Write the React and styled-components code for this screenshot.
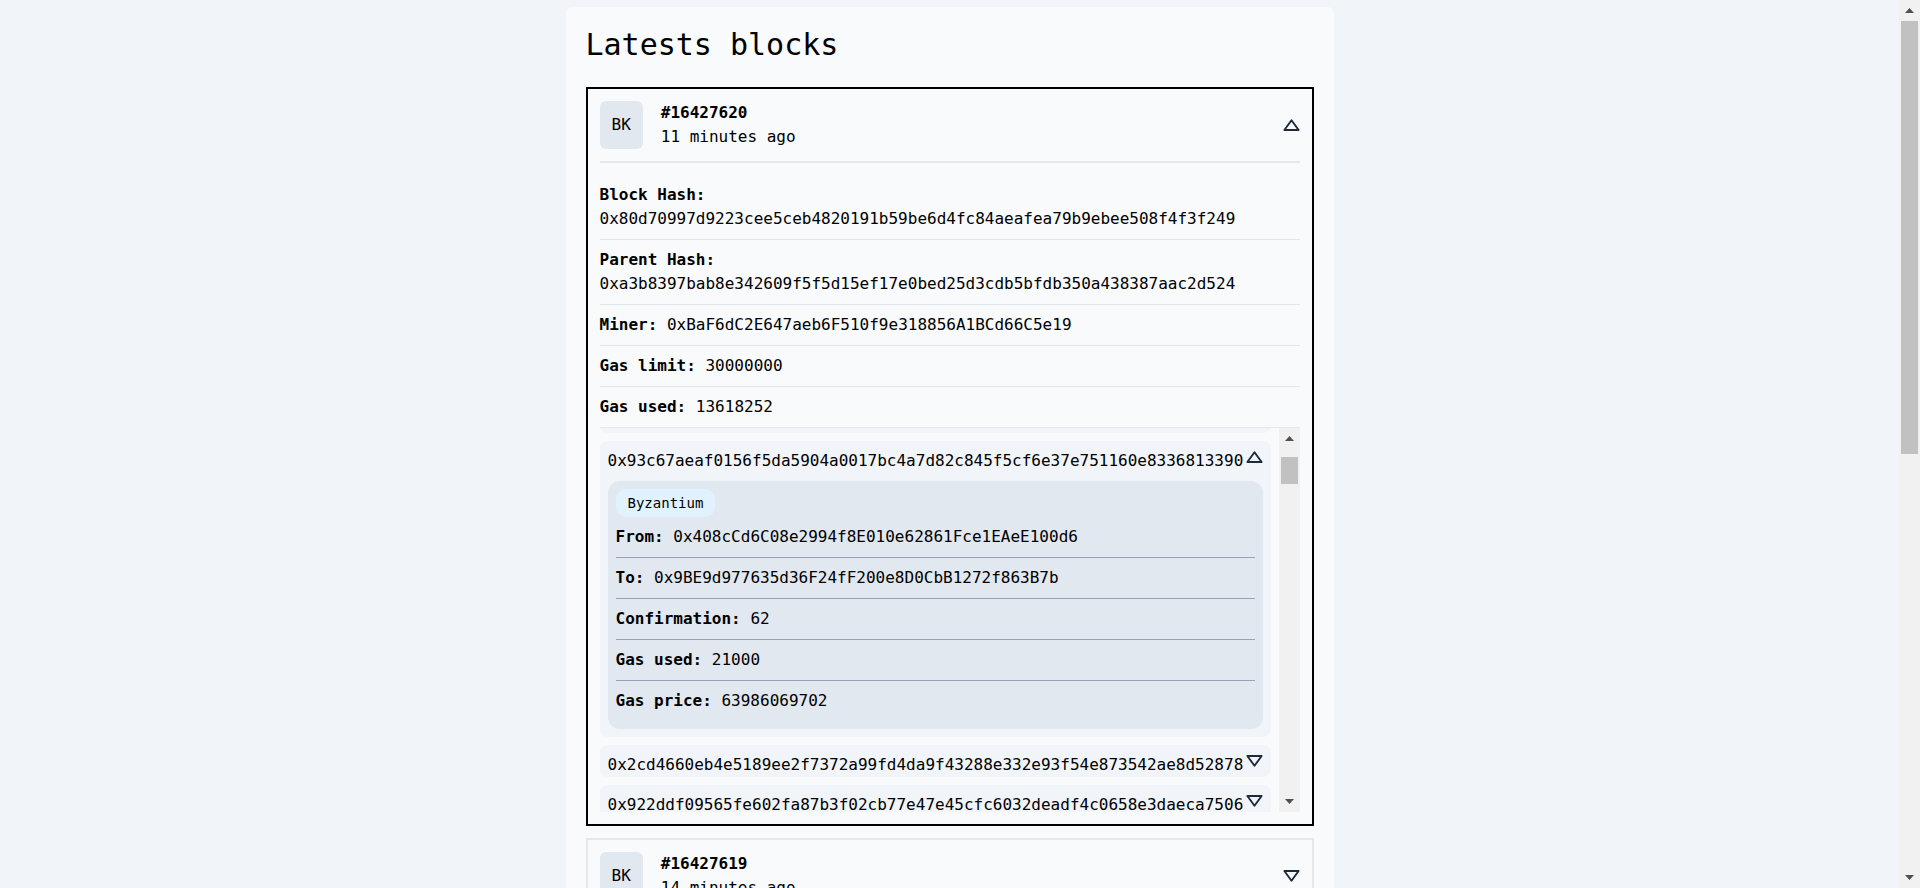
import React, { useCallback, useEffect, useLayoutEffect, useRef, useState } from 'react';
import styled, { createGlobalStyle } from 'styled-components';

const GlobalStyle = createGlobalStyle`
  html, body { margin: 0; padding: 0; background: #f1f5f9; }
  html { scrollbar-width: none; }
  body {
    font-family: "DejaVu Sans Mono", "Liberation Mono", monospace;
    color: #000;
    font-size: 16px;
    line-height: 24px;
  }
  *, *::before, *::after { box-sizing: border-box; }
`;

/* ---------- scrollbar look-alike ---------- */

const Rail = styled.div`
  width: 21px;
  flex-shrink: 0;
  background: #f1f1f1;
  display: flex;
  flex-direction: column;
  ${(p) => p.$window && 'position: fixed; top: 0; right: 0; height: 100vh;'}
`;

const RailButton = styled.div`
  height: 21px;
  flex-shrink: 0;
  display: flex;
  align-items: center;
  justify-content: center;
`;

const RailTrack = styled.div`
  flex: 1;
  position: relative;
`;

const RailThumb = styled.div`
  position: absolute;
  left: 2px;
  right: 2px;
  background: #c1c1c1;
`;

function Arrow({ up }) {
  return (
    <svg width="9" height="5" viewBox="0 0 9 5" aria-hidden="true">
      <polygon points={up ? '4.5,0 9,5 0,5' : '0,0 9,0 4.5,5'} fill="#505050" />
    </svg>
  );
}

function ScrollRail({ thumb, window: isWindow }) {
  return (
    <Rail $window={isWindow}>
      <RailButton><Arrow up /></RailButton>
      <RailTrack>
        <RailThumb style={{ top: thumb.top, height: thumb.height }} />
      </RailTrack>
      <RailButton><Arrow /></RailButton>
    </Rail>
  );
}

function thumbFor(scrollTop, scrollHeight, clientHeight, track) {
  if (scrollHeight <= clientHeight || track <= 0) return { top: 0, height: 0 };
  const height = Math.max(18, (track * clientHeight) / scrollHeight);
  const top = (scrollTop / (scrollHeight - clientHeight)) * (track - height);
  return { top, height };
}

/* ---------- page ---------- */

const Page = styled.div`
  padding: 7px 21px 8px 0;
`;

const Panel = styled.main`
  max-width: 768px;
  margin: 0 auto;
  background: #f8fafc;
  border-radius: 6px;
  padding: 20px;
`;

const Title = styled.h1`
  margin: 0 0 24px;
  font-size: 30px;
  line-height: 36px;
  font-weight: 400;
`;

const BlockList = styled.div`
  display: flex;
  flex-direction: column;
  gap: 12px;
`;

const Card = styled.section`
  border: 2px solid ${(p) => (p.$open ? '#000' : '#e5e7eb')};
  padding: 12px;
`;

const CardHeader = styled.div`
  display: flex;
  align-items: center;
  justify-content: space-between;
  cursor: pointer;
  ${(p) => p.$open && 'padding-bottom: 12px; border-bottom: 2px solid #e5e7eb;'}
`;

const Ident = styled.div`
  display: flex;
  align-items: center;
  gap: 18px;
`;

const Avatar = styled.div`
  padding: 12px;
  background: #e2e8f0;
  border-radius: 6px;
  line-height: 24px;
`;

const BlockNo = styled.div`
  font-weight: 700;
`;

const Details = styled.div`
  margin-top: 12px;
`;

const Row = styled.div`
  padding: 8px 0;
  border-bottom: 1px solid #e2e8f0;
`;

const Label = styled.b`
  font-weight: 700;
`;

const ScrollFrame = styled.div`
  display: flex;
  align-items: stretch;
`;

const TxScroller = styled.div`
  flex: 1;
  min-width: 0;
  max-height: 384px;
  overflow-y: auto;
  padding-right: 8px;
  scrollbar-width: none;
  &::-webkit-scrollbar { display: none; }
`;

const TxList = styled.div`
  display: flex;
  flex-direction: column;
  gap: 8px;
`;

const TxItem = styled.div`
  background: #f1f5f9;
  border-radius: 8px;
  padding: 8px 8px 0;
`;

const TxHead = styled.div`
  display: flex;
  justify-content: space-between;
  align-items: flex-start;
  cursor: pointer;
`;

const TxHash = styled.span`
  white-space: nowrap;
`;

const TxBody = styled.div`
  margin: 8px 0;
  background: #e2e8f0;
  border-radius: 12px;
  padding: 8px;
`;

const Badge = styled.span`
  display: block;
  width: fit-content;
  background: #e0f2fe;
  border-radius: 10px;
  padding: 4px 12px;
  font-size: 14px;
  line-height: 20px;
`;

const TxRow = styled.div`
  padding: 8px 0;
  &:not(:last-child) {
    border-bottom: 1px solid #94a3b8;
  }
`;

const ToggleIcon = styled.svg`
  flex-shrink: 0;
  display: block;
  margin-top: ${(p) => (p.$inline ? '2px' : '0')};
`;

function Toggle({ open, inline }) {
  return (
    <ToggleIcon $inline={inline} width="17" height="12" viewBox="0 0 17 12" aria-hidden="true">
      <polygon
        points={open ? '8.5,1.2 15.6,11 1.4,11' : '1.4,1 15.6,1 8.5,10.8'}
        fill="none"
        stroke="#1f2937"
        strokeWidth="1.9"
        strokeLinejoin="round"
      />
    </ToggleIcon>
  );
}

function makeHashes(count, seed) {
  let s = seed;
  const out = [];
  for (let i = 0; i < count; i++) {
    let h = '0x';
    for (let j = 0; j < 64; j++) {
      s = (s * 1103515245 + 12345) % 2147483648;
      h += ((s >> 16) & 15).toString(16);
    }
    out.push(h);
  }
  return out;
}

const filler = makeHashes(112, 16427620);

const openTx = {
  hash: '0x93c67aeaf0156f5da5904a0017bc4a7d82c845f5cf6e37e751160e8336813390',
  network: 'Byzantium',
  from: '0x408cCd6C08e2994f8E010e62861Fce1EAeE100d6',
  to: '0x9BE9d977635d36F24fF200e8D0CbB1272f863B7b',
  confirmation: '62',
  gasUsed: '21000',
  gasPrice: '63986069702',
};

const txs = [
  ...filler.slice(0, 3).map((h) => ({ hash: h })),
  openTx,
  { hash: '0x2cd4660eb4e5189ee2f7372a99fd4da9f43288e332e93f54e873542ae8d52878' },
  { hash: '0x922ddf09565fe602fa87b3f02cb77e47e45cfc6032deadf4c0658e3daeca7506' },
  ...filler.slice(3).map((h) => ({ hash: h })),
];

const firstBlock = {
  number: 16427620,
  ago: '11 minutes ago',
  hash: '0x80d70997d9223cee5ceb4820191b59be6d4fc84aeafea79b9ebee508f4f3f249',
  parent: '0xa3b8397bab8e342609f5f5d15ef17e0bed25d3cdb5bfdb350a438387aac2d524',
  miner: '0xBaF6dC2E647aeb6F510f9e318856A1BCd66C5e19',
  gasLimit: '30000000',
  gasUsed: '13618252',
};

const otherBlocks = [14, 14, 15, 15, 15, 16, 16, 16, 17, 17].map((m, i) => ({
  number: 16427619 - i,
  ago: `${m} minutes ago`,
}));

function TxEntry({ tx, open, onToggle, itemRef }) {
  return (
    <TxItem ref={itemRef}>
      <TxHead onClick={onToggle}>
        <TxHash>{tx.hash}</TxHash>
        <Toggle open={open} inline />
      </TxHead>
      {open && (
        <TxBody>
          <Badge>{tx.network || 'Byzantium'}</Badge>
          <TxRow><Label>From:</Label> {tx.from || '—'}</TxRow>
          <TxRow><Label>To:</Label> {tx.to || '—'}</TxRow>
          <TxRow><Label>Confirmation:</Label> {tx.confirmation || '—'}</TxRow>
          <TxRow><Label>Gas used:</Label> {tx.gasUsed || '—'}</TxRow>
          <TxRow><Label>Gas price:</Label> {tx.gasPrice || '—'}</TxRow>
        </TxBody>
      )}
    </TxItem>
  );
}

function OpenBlock({ block, onToggle }) {
  const [openHash, setOpenHash] = useState(openTx.hash);
  const [thumb, setThumb] = useState({ top: 0, height: 0 });
  const scrollerRef = useRef(null);
  const itemRef = useRef(null);

  const measure = useCallback(() => {
    const sc = scrollerRef.current;
    if (!sc) return;
    setThumb(thumbFor(sc.scrollTop, sc.scrollHeight, sc.clientHeight, sc.clientHeight - 42));
  }, []);

  useLayoutEffect(() => {
    const sc = scrollerRef.current;
    const it = itemRef.current;
    if (sc && it) {
      const delta = it.getBoundingClientRect().top - sc.getBoundingClientRect().top;
      sc.scrollTop = sc.scrollTop + delta - 13;
    }
    measure();
  }, [measure]);

  useLayoutEffect(() => {
    measure();
  }, [openHash, measure]);

  return (
    <Card $open>
      <CardHeader $open onClick={onToggle}>
        <Ident>
          <Avatar>BK</Avatar>
          <div>
            <BlockNo>#{block.number}</BlockNo>
            <div>{block.ago}</div>
          </div>
        </Ident>
        <Toggle open />
      </CardHeader>
      <Details>
        <Row><Label>Block Hash:</Label> {block.hash}</Row>
        <Row><Label>Parent Hash:</Label> {block.parent}</Row>
        <Row><Label>Miner:</Label> {block.miner}</Row>
        <Row><Label>Gas limit:</Label> {block.gasLimit}</Row>
        <Row><Label>Gas used:</Label> {block.gasUsed}</Row>
        <ScrollFrame>
          <TxScroller ref={scrollerRef} onScroll={measure}>
            <TxList>
              {txs.map((tx) => (
                <TxEntry
                  key={tx.hash}
                  tx={tx}
                  open={openHash === tx.hash}
                  itemRef={tx.hash === openTx.hash ? itemRef : undefined}
                  onToggle={() => setOpenHash(openHash === tx.hash ? null : tx.hash)}
                />
              ))}
            </TxList>
          </TxScroller>
          <ScrollRail thumb={thumb} />
        </ScrollFrame>
      </Details>
    </Card>
  );
}

function ClosedBlock({ block, onToggle }) {
  return (
    <Card>
      <CardHeader onClick={onToggle}>
        <Ident>
          <Avatar>BK</Avatar>
          <div>
            <BlockNo>#{block.number}</BlockNo>
            <div>{block.ago}</div>
          </div>
        </Ident>
        <Toggle open={false} />
      </CardHeader>
    </Card>
  );
}

export default function App() {
  const [firstOpen, setFirstOpen] = useState(true);
  const [pageThumb, setPageThumb] = useState({ top: 0, height: 0 });

  useEffect(() => {
    const update = () => {
      const doc = document.documentElement;
      setPageThumb(
        thumbFor(window.scrollY, doc.scrollHeight, window.innerHeight, window.innerHeight - 42)
      );
    };
    update();
    window.addEventListener('scroll', update);
    window.addEventListener('resize', update);
    return () => {
      window.removeEventListener('scroll', update);
      window.removeEventListener('resize', update);
    };
  }, [firstOpen]);

  return (
    <Page>
      <GlobalStyle />
      <Panel>
        <Title>Latests blocks</Title>
        <BlockList>
          {firstOpen ? (
            <OpenBlock block={firstBlock} onToggle={() => setFirstOpen(false)} />
          ) : (
            <ClosedBlock block={firstBlock} onToggle={() => setFirstOpen(true)} />
          )}
          {otherBlocks.map((b) => (
            <ClosedBlock key={b.number} block={b} />
          ))}
        </BlockList>
      </Panel>
      <ScrollRail thumb={pageThumb} window />
    </Page>
  );
}
